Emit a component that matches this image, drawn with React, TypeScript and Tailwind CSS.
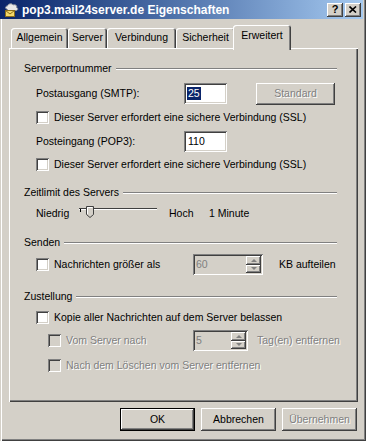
import React from "react";

const raised =
  "shadow-[inset_-1px_-1px_#404040,inset_1px_1px_#ffffff,inset_-2px_-2px_#808080,inset_2px_2px_#d4d0c8]";
const sunken =
  "shadow-[inset_1px_1px_#808080,inset_-1px_-1px_#ffffff,inset_2px_2px_#404040,inset_-2px_-2px_#d4d0c8]";
const grayText = "text-[#808080] [text-shadow:1px_1px_0_#ffffff]";

function TitleIcon() {
  return (
    <svg width="16" height="16" viewBox="0 0 16 16" className="shrink-0">
      <path d="M3 7 C1 7 1 4 3.5 4 C4 1.5 8 1 9 3 C11 2 13.5 3.5 12.5 5.5 C14.5 6 14 8.5 12 8.5 L4 8.5 Z" fill="#e8e8e8" stroke="#8a8f9a" strokeWidth="1" />
      <rect x="1.5" y="8.5" width="9" height="6" fill="#f4d86a" stroke="#8a6d1c" strokeWidth="1" />
      <path d="M1.5 8.5 L6 12 L10.5 8.5" fill="none" stroke="#8a6d1c" strokeWidth="1" />
    </svg>
  );
}

function TitleButton({ children }: { children: React.ReactNode }) {
  return (
    <div className={`w-[16px] h-[14px] flex items-center justify-center bg-[#d4d0c8] ${raised}`}>
      {children}
    </div>
  );
}

function Tab({ label, w, active }: { label: string; w: string; active?: boolean }) {
  if (active) {
    return (
      <div
        className={`${w} h-[25px] -mx-[2px] relative z-10 bg-[#d4d0c8] rounded-t-[3px] flex justify-center pt-[5px] shadow-[inset_1px_1px_#ffffff,inset_-1px_0_#404040,inset_-2px_0_#808080]`}
      >
        {label}
      </div>
    );
  }
  return (
    <div
      className={`${w} h-[20px] mb-[2px] bg-[#d4d0c8] rounded-t-[3px] flex justify-center pt-[4px] shadow-[inset_1px_1px_#ffffff,inset_-1px_0_#404040,inset_-2px_0_#808080]`}
    >
      {label}
    </div>
  );
}

function Group({ label, className }: { label: string; className: string }) {
  return (
    <div className={`flex items-center h-[13px] ${className}`}>
      <span className="whitespace-nowrap">{label}</span>
      <div className="flex-1 ml-[4px] h-0 border-t border-b border-t-[#808080] border-b-white" />
    </div>
  );
}

function Check({ disabled }: { disabled?: boolean }) {
  return (
    <span
      className={`w-[13px] h-[13px] shrink-0 ${disabled ? "bg-[#d4d0c8]" : "bg-white"} ${sunken}`}
    />
  );
}

function Spinner({ value, w }: { value: string; w: string }) {
  return (
    <div className={`${w} h-[21px] shrink-0 flex items-center bg-[#d4d0c8] ${sunken} pl-[3px] pr-[2px] py-[2px]`}>
      <span className="flex-1 text-[#808080]">{value}</span>
      <div className="w-[15px] h-[17px] flex flex-col">
        {["M1 4 L4 1 L7 4 Z", "M1 1 L4 4 L7 1 Z"].map((d) => (
          <div key={d} className={`flex-1 flex items-center justify-center bg-[#d4d0c8] ${raised}`}>
            <svg width="8" height="5" viewBox="0 0 8 5">
              <path d={d} fill="#808080" />
            </svg>
          </div>
        ))}
      </div>
    </div>
  );
}

function Slider() {
  return (
    <svg width="78" height="14" viewBox="0 0 78 14" className="shrink-0">
      <rect x="0" y="2" width="78" height="1" fill="#404040" />
      <rect x="0" y="3" width="78" height="1" fill="#ffffff" />
      <rect x="1" y="3" width="1" height="3" fill="#000000" />
      <path d="M7.5 0.5 L14.5 0.5 L14.5 8.5 L11 11.5 L7.5 8.5 Z" fill="#d4d0c8" stroke="#404040" />
      <path d="M8.5 8 L8.5 1.5 L13.5 1.5" fill="none" stroke="#ffffff" />
    </svg>
  );
}

function Button({ label, def, disabled }: { label: string; def?: boolean; disabled?: boolean }) {
  return (
    <div
      className={`w-[75px] h-[23px] flex items-center justify-center bg-[#d4d0c8] ${def ? "border border-black" : ""}`}
    >
      <div className={`w-full h-full flex items-center justify-center ${raised} ${disabled ? grayText : ""}`}>
        {label}
      </div>
    </div>
  );
}

export default function App() {
  return (
    <div className="w-[366px] h-[441px] flex flex-col bg-[#d4d0c8] text-black text-[10.5px] leading-none whitespace-nowrap font-['Liberation_Sans',Arial,sans-serif] shadow-[inset_1px_0_#d4d0c8,inset_2px_0_#ffffff,inset_-1px_-1px_#404040,inset_-2px_-2px_#808080] overflow-hidden">
      {/* title bar */}
      <div className="w-[363px] h-[19px] flex items-center pl-[4px] pr-[2px] bg-linear-to-r from-[#0a246a] to-[#a6caf0]">
        <TitleIcon />
        <span className="ml-[2px] text-white font-bold text-[12px]">pop3.mail24server.de Eigenschaften</span>
        <div className="ml-auto flex gap-[2px]">
          <TitleButton>
            <span className="font-bold text-[11px] leading-none">?</span>
          </TitleButton>
          <TitleButton>
            <svg width="8" height="7" viewBox="0 0 8 7">
              <path d="M0.5 0.5 L7 6.5 M7 0.5 L0.5 6.5" stroke="#000" strokeWidth="1.6" />
            </svg>
          </TitleButton>
        </div>
      </div>

      {/* tabs */}
      <div className="mt-[6px] ml-[9px] pl-[2px] h-[25px] -mb-[2px] flex items-end relative z-10">
        <Tab label="Allgemein" w="w-[57px]" />
        <Tab label="Server" w="w-[39px]" />
        <Tab label="Verbindung" w="w-[69px]" />
        <Tab label="Sicherheit" w="w-[59px]" />
        <Tab label="Erweitert" w="w-[58px]" active />
      </div>

      {/* panel */}
      <div className="ml-[9px] w-[349px] h-[354px] flex flex-col pl-[15px] pr-[21px] pt-[14px] shadow-[inset_1px_1px_#ffffff,inset_-1px_-1px_#404040,inset_-2px_-2px_#808080]">
        <Group label="Serverportnummer" className="" />

        <div className="mt-[8px] pl-[12px] flex items-center h-[21px]">
          <span className="w-[148px]">Postausgang (SMTP):</span>
          <div className={`w-[43px] h-[21px] bg-white ${sunken} flex items-center pl-[3px]`}>
            <span className="bg-[#0a246a] text-white px-[1px] py-[1px]">25</span>
          </div>
          <div className={`ml-[29px] w-[79px] h-[22px] flex items-center justify-center ${raised} ${grayText}`}>
            Standard
          </div>
        </div>

        <div className="mt-[7px] pl-[12px] flex items-center gap-[5px] h-[13px]">
          <Check />
          <span>Dieser Server erfordert eine sichere Verbindung (SSL)</span>
        </div>

        <div className="mt-[7px] pl-[12px] flex items-center h-[21px]">
          <span className="w-[148px]">Posteingang (POP3):</span>
          <div className={`w-[43px] h-[21px] bg-white ${sunken} flex items-center pl-[4px]`}>110</div>
        </div>

        <div className="mt-[6px] pl-[12px] flex items-center gap-[5px] h-[13px]">
          <Check />
          <span>Dieser Server erfordert eine sichere Verbindung (SSL)</span>
        </div>

        <Group label="Zeitlimit des Servers" className="mt-[15px]" />

        <div className="mt-[7px] pl-[12px] flex items-center h-[14px]">
          <span className="w-[43px]">Niedrig</span>
          <Slider />
          <span className="ml-[12px] w-[40px]">Hoch</span>
          <span>1 Minute</span>
        </div>

        <Group label="Senden" className="mt-[16px]" />

        <div className="mt-[5px] pl-[12px] flex items-center h-[21px]">
          <div className="w-[157px] shrink-0 flex items-center gap-[5px]">
            <Check />
            <span>Nachrichten größer als</span>
          </div>
          <Spinner value="60" w="w-[70px]" />
          <span className="ml-[16px]">KB aufteilen</span>
        </div>

        <Group label="Zustellung" className="mt-[15px]" />

        <div className="mt-[8px] pl-[12px] flex items-center gap-[5px] h-[13px]">
          <Check />
          <span>Kopie aller Nachrichten auf dem Server belassen</span>
        </div>

        <div className="mt-[6px] pl-[24px] flex items-center h-[21px]">
          <div className="w-[145px] shrink-0 flex items-center gap-[5px]">
            <Check disabled />
            <span className={grayText}>Vom Server nach</span>
          </div>
          <Spinner value="5" w="w-[55px]" />
          <span className={`ml-[9px] ${grayText}`}>Tag(en) entfernen</span>
        </div>

        <div className="mt-[8px] pl-[24px] flex items-center gap-[5px] h-[13px]">
          <Check disabled />
          <span className={grayText}>Nach dem Löschen vom Server entfernen</span>
        </div>
      </div>

      {/* dialog buttons */}
      <div className="mt-[6px] pr-[9px] flex justify-end gap-[6px]">
        <Button label="OK" def />
        <Button label="Abbrechen" />
        <Button label="Übernehmen" disabled />
      </div>
    </div>
  );
}
